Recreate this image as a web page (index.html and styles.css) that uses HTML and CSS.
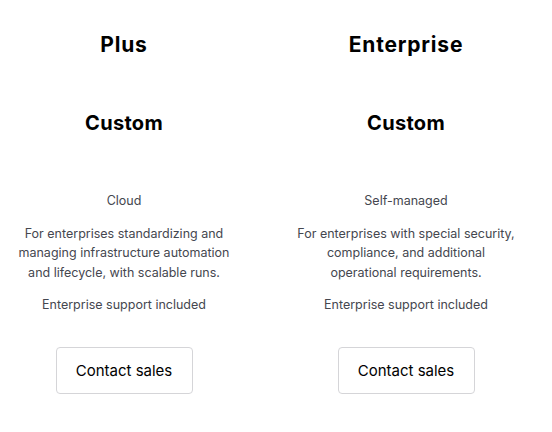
FILE: index.html
```html
<!DOCTYPE html>
<html lang="en">
<head>
  <meta charset="UTF-8">
  <meta name="viewport" content="width=device-width, initial-scale=1.0">
  <title>Pricing tiers</title>
  <link rel="stylesheet" href="styles.css">
</head>
<body>
  <div class="tiers">
    <div class="tier">
      <h2 class="tier-name">Plus</h2>
      <div class="price">Custom</div>
      <p class="hosting">Cloud</p>
      <p class="desc">For enterprises standardizing and managing infrastructure automation and lifecycle, with scalable runs.</p>
      <p class="support">Enterprise support included</p>
      <button class="btn">Contact sales</button>
    </div>
    <div class="tier">
      <h2 class="tier-name">Enterprise</h2>
      <div class="price">Custom</div>
      <p class="hosting">Self-managed</p>
      <p class="desc">For enterprises with special security, compliance, and additional operational requirements.</p>
      <p class="support">Enterprise support included</p>
      <button class="btn">Contact sales</button>
    </div>
  </div>
</body>
</html>
```

FILE: styles.css
```css
body {
  margin: 0;
  padding: 0 0 0 14px;
  font-family: Inter, "Noto Sans", sans-serif;
  background: #fff;
  color: #000;
}
.tiers {
  display: grid;
  grid-template-columns: 220px 220px;
  column-gap: 62px;
}
.tier {
  display: flex;
  flex-direction: column;
  align-items: center;
  text-align: center;
}
.tier-name {
  margin: 31px 0 0;
  font-size: 21px;
  line-height: 28px;
  font-weight: 700;
  letter-spacing: 0.8px;
}
.price {
  margin-top: 50px;
  font-size: 20px;
  line-height: 28px;
  font-weight: 700;
  letter-spacing: 0.3px;
}
.hosting,
.desc,
.support {
  margin: 0;
  font-size: 12.5px;
  line-height: 19.5px;
  color: #45474f;
}
.hosting {
  margin-top: 54px;
}
.desc {
  margin-top: 13px;
}
.support {
  margin-top: 13px;
}
.btn {
  margin-top: 32px;
  width: 137px;
  height: 47px;
  background: #fff;
  border: 1px solid #d5d5d8;
  border-radius: 4px;
  font-family: inherit;
  font-size: 15px;
  color: #000;
  cursor: pointer;
}
```
